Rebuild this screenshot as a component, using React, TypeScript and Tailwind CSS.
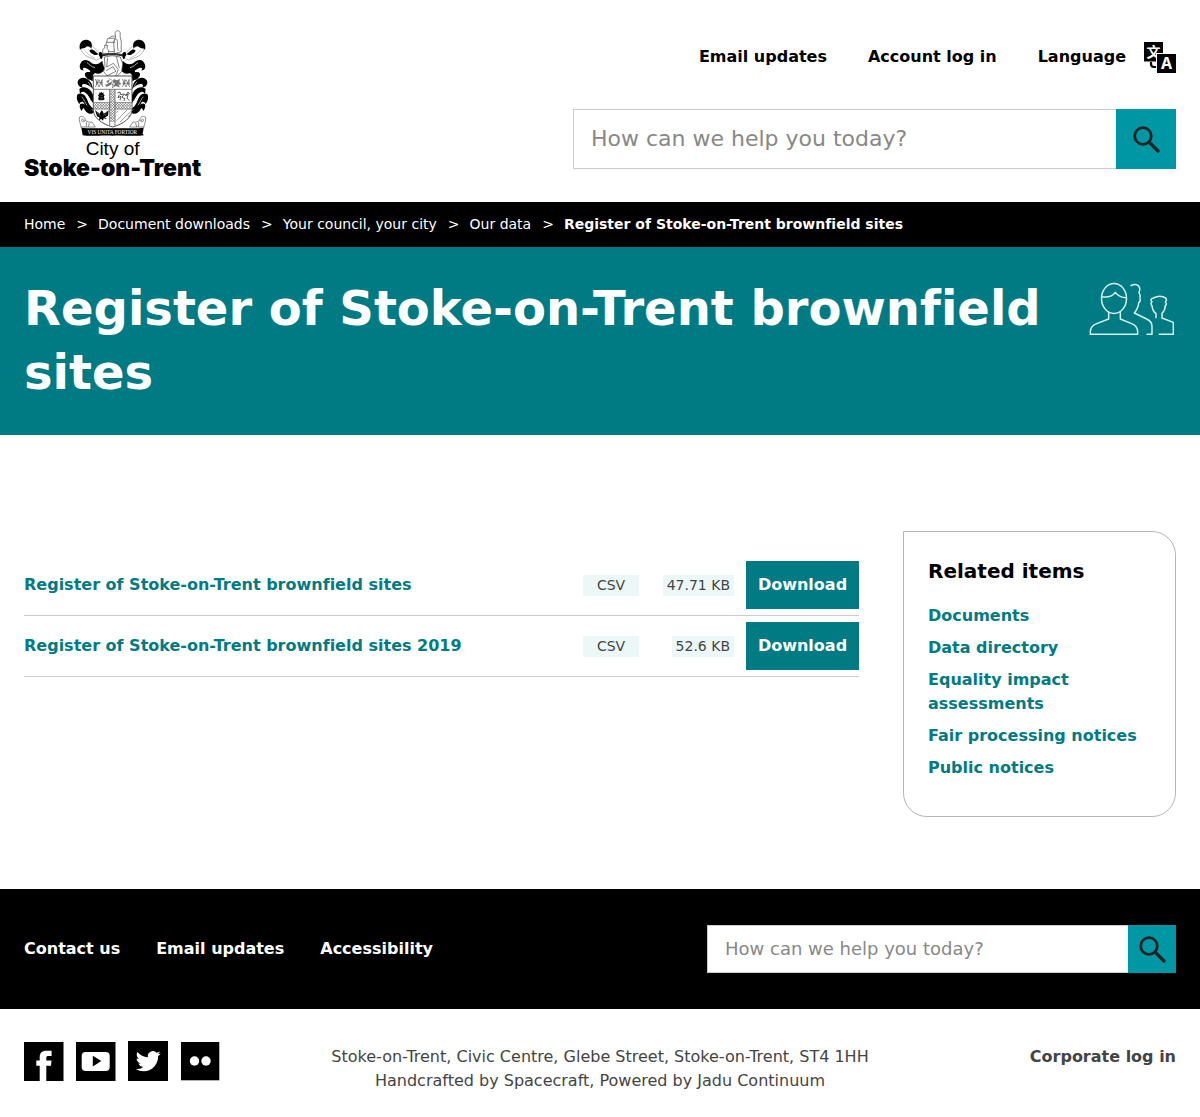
import React from "react";

/* One side of the crest's mantling; the other side is its mirror image. */
function Mantling() {
  return (
    <g>
      <path d="M204 88C206 96 214 107 228 112L250 120L268 112L258 98L236 76C230 72 222 72 218 79Z" fill="#fff" stroke="#777" strokeWidth="1.6" />
      <path d="M212 90C220 96 228 108 246 114M226 78C236 84 246 98 260 106" fill="none" stroke="#888" strokeWidth="1.4" />
      <path d="M201 90C196 71 207 57 224 60C236 63 239 74 235 85C229 78 223 77 218 82C213 88 206 80 201 90Z" />
      <path d="M230 90C236 86 243 90 247 95L256 102C251 107 243 105 238 101C233 98 229 96 230 90Z" />
      <path d="M259 97C264 94 270 99 270 106L266 118C260 116 261 108 257 104Z" />
      <path d="M201 134C205 118 221 116 232 126C243 136 256 135 268 122L270 138C264 150 254 156 244 155C230 155 224 143 214 143C208 143 208 148 213 151C203 152 198 143 201 134Z" />
      <path d="M222 128C229 132 234 141 246 143M232 121C240 128 250 128 260 121" fill="none" stroke="#fff" strokeWidth="2" />
      <path d="M246 148C256 146 265 138 269 129L275 147C269 160 256 164 246 159L238 167C228 166 228 156 234 151Z" />
      <path d="M220 157C231 153 240 160 240 169L239 184C232 178 228 182 222 175C214 168 214 160 220 157Z" />
      <path d="M195 182C201 171 216 170 226 179C234 186 239 194 239 207C231 200 224 192 214 192C206 192 205 198 210 202C199 203 191 192 195 182Z" />
      <path d="M199 207C209 197 225 202 234 213L240 224V248C229 237 226 220 213 216C207 214 203 218 201 222Z" />
      <path d="M194 223C204 216 217 223 222 238C227 254 235 261 242 268C230 274 218 262 213 250C209 242 203 245 199 252C192 243 189 231 194 223Z" />
      <path d="M202 252C212 246 219 257 228 265C234 270 239 270 245 275C234 287 220 279 215 269C212 262 208 264 207 273C201 268 198 258 202 252Z" />
      <path d="M218 221C226 228 228 239 236 252M225 186C231 191 235 203 238 213M206 230C212 236 215 246 222 256" fill="none" stroke="#fff" strokeWidth="1.8" />
      <path d="M200 291C207 286 218 292 216 301C214 308 204 307 206 299C209 294 214 301 210 303M200 291C196 298 202 309 205 324M216 300C222 305 230 308 237 306L247 321H205M220 306V321M229 309L226 321" fill="none" stroke="#555" strokeWidth="2" />
    </g>
  );
}

function Fret({ x, y }: { x: number; y: number }) {
  return (
    <path
      d={`M${x} ${y}l8 8l-8 8M${x + 8} ${y}l-8 8l8 8`}
      fill="none"
      stroke="#444"
      strokeWidth="1.5"
    />
  );
}

function Crest() {
  return (
    <svg viewBox="180 30 240 321" className="h-[107px] w-20" aria-hidden="true">
      <Mantling />
      <g transform="translate(597 0) scale(-1 1)">
        <Mantling />
      </g>
      {/* crest figure on its kiln */}
      <g fill="#fff" stroke="#444" strokeWidth="2">
        <path d="M307 45C304 34 312 29 319 34C325 39 319 46 322 53C328 67 323 79 325 95L304 101L300 69L308 55Z" />
        <path d="M284 55L306 55L302 67L304 95H282L279 73Z" />
        <path d="M270 100C267 91 270 85 276 83L274 76H284L282 85C288 89 287 96 285 101Z" />
        <path d="M288 55C293 49 301 47 307 49M311 57C316 65 310 78 316 92M306 67H281" fill="none" />
      </g>
      <path d="M268 103Q298 95 329 103L327 109Q298 102 270 109Z" fill="#333" />
      <g fill="#fff" stroke="#444" strokeWidth="2">
        <path d="M274 111Q298 103 322 111L329 132L326 154L312 169H284L272 155L276 139Z" />
        <path d="M284 113L281 141L301 130L316 149L308 168" fill="none" />
        <path d="M310 109L319 144M279 152L300 140L309 154L283 167" fill="none" />
      </g>
      {/* shield */}
      <path d="M241 168H357V270C357 292 332 312 299 321C266 312 241 292 241 270Z" fill="#fff" stroke="#333" strokeWidth="2.5" />
      <path d="M241 208H357M241 248H290M306 248H357M242 267H290M306 267H356M290 208V317M306 208V317" stroke="#444" strokeWidth="2" fill="none" />
      <g fill="none" stroke="#555" strokeWidth="2">
        <path d="M247 177L258 201L269 178M247 201L258 179L270 201M250 188H269M328 177L339 201L350 178M328 201L339 179L350 201M329 190H350M253 178L250 195M265 179L268 195M335 178L331 195M347 179L349 195" />
      </g>
      <path d="M280 184L290 178L286 189L297 186L293 195L281 201L276 194L286 191ZM304 178L313 181L321 176L319 186L326 193L317 194L321 202L308 198L302 201L306 191L300 187Z" fill="#777" />
      <path d="M288 175L299 182L292 191L306 197M302 178L298 204L311 191" stroke="#444" strokeWidth="1.5" fill="none" />
      {[210, 226, 242, 258, 274, 290].map((y) => (
        <g key={y}>
          <Fret x={290} y={y} />
          <Fret x={298} y={y} />
        </g>
      ))}
      {[243, 251, 259, 267, 275, 283, 306, 314, 322, 330, 338, 346].map((x) => (
        <Fret key={x} x={x} y={250} />
      ))}
      <path d="M258 216L261 220L265 215L268 220L272 216L271 222L275 226L272 231L275 237L271 241H259L255 237L258 231L255 226L259 222Z" />
      <path d="M260 226H270M260 232H270M260 237H270" stroke="#bbb" strokeWidth="1" />
      <path d="M313 219L321 216L323 224L333 222L339 226L346 222L342 234L349 242M319 224L315 233L324 229L321 241M333 223L327 232L336 236L333 243M338 228L345 216L350 222" fill="none" stroke="#222" strokeWidth="2.2" />
      <path d="M246 270L260 281L263 275L266 271L270 275L272 281L287 271L285 287L276 292L281 297L272 295L270 302L265 297L257 301L260 293L252 289Z" />
      <path d="M250 272L257 287M283 273L277 288M256 276L262 289M278 276L271 289" stroke="#bbb" strokeWidth="1" />
      <path d="M311 302L343 269M321 306L354 274M309 278L316 273M346 291L351 284" fill="none" stroke="#555" strokeWidth="1.8" />
      {/* motto ribbon */}
      <path d="M205 323C233 327 265 323 299 325C332 323 363 327 392 323L389 342L393 346C365 350 330 345 299 347C266 345 234 350 209 346Z" />
      <text x="298" y="341" textAnchor="middle" fontSize="16" fill="#fff" className="font-['Liberation_Serif',serif]">
        VIS UNITA FORTIOR
      </text>
    </svg>
  );
}

function Logo() {
  return (
    <a href="#home" className="flex flex-col items-center text-black">
      <Crest />
      <span className="mt-0.5 font-['Liberation_Sans',sans-serif] text-[19px] leading-5">City of</span>
      <span className="font-['Inter',sans-serif] text-[23px] leading-[18px] font-black">Stoke-on-Trent</span>
    </a>
  );
}

function TranslateIcon() {
  return (
    <svg viewBox="0 0 32 32" className="size-8" aria-hidden="true">
      <rect width="19" height="19.500" />
      <text x="9.500" y="14.500" textAnchor="middle" fontSize="14" fontWeight="700" fill="#fff" className="font-['Noto_Sans_CJK_SC',sans-serif]">
        文
      </text>
      <path d="M7 20V22Q7 25 10 25H13" fill="none" stroke="#000" strokeWidth="2.200" />
      <rect x="12" y="11" width="20" height="20" fill="#fff" />
      <rect x="13" y="12" width="19" height="19" />
      <text x="22.500" y="27" textAnchor="middle" fontSize="16" fontWeight="700" fill="#fff" className="font-['Noto_Sans',sans-serif]">
        A
      </text>
    </svg>
  );
}

function SearchIcon() {
  return (
    <svg viewBox="0 0 28 28" className="size-7" fill="none" stroke="#222" strokeLinecap="round" aria-hidden="true">
      <circle cx="11" cy="11" r="8.300" strokeWidth="2.800" />
      <path d="M17 17L26 26" strokeWidth="3.200" />
    </svg>
  );
}

function PeopleIcon() {
  return (
    <svg viewBox="27 36 255 162" className="mt-1.5 mr-0.5 h-[54px] w-[85px] shrink-0" fill="none" stroke="#d5f0ee" strokeWidth="4.500" strokeLinecap="round" strokeLinejoin="round" aria-hidden="true">
      <ellipse cx="102" cy="85.500" rx="37.500" ry="45" />
      <path d="M65 80Q93 85 106 67Q118 83 139 83" />
      <path d="M86 128V147L50 161Q31 168 31 185V193H173V185Q173 168 155 161L121 147V128" />
      <path d="M153 47Q163 40 174 46Q183 54 177 68Q183 76 180 85Q182 96 176 98Q176 112 163 129L200 147Q217 155 216 171V193H201" />
      <path d="M228 143V131Q217 122 216 107Q210 101 216 95Q208 88 220 84Q240 74 257 84Q262 90 256 96Q262 102 256 107Q255 122 246 130V144L280 157V193H238" />
    </svg>
  );
}

function SearchForm({ id, large }: { id: string; large?: boolean }) {
  return (
    <form role="search" onSubmit={(e) => e.preventDefault()} className={large ? "flex h-[60px] w-full" : "flex h-12 w-full"}>
      <input
        id={id}
        type="search"
        aria-label="Search this site"
        placeholder="How can we help you today?"
        className={
          large
            ? "min-w-0 flex-1 border border-r-0 border-[#ccc] bg-white px-[17px] pb-0.5 text-[22px] text-black placeholder:text-[#888]"
            : "min-w-0 flex-1 border border-r-0 border-[#ccc] bg-white px-[17px] pb-0.5 text-[18px] text-black placeholder:text-[#888]"
        }
      />
      <button type="submit" aria-label="Search" className={large ? "flex w-[60px] items-center justify-center bg-[#0097a4]" : "flex w-12 items-center justify-center bg-[#0097a4]"}>
        <SearchIcon />
      </button>
    </form>
  );
}

const crumbs = ["Home", "Document downloads", "Your council, your city", "Our data"];

const files = [
  { name: "Register of Stoke-on-Trent brownfield sites", type: "CSV", size: "47.71 KB" },
  { name: "Register of Stoke-on-Trent brownfield sites 2019", type: "CSV", size: "52.6 KB" },
];

const related = ["Documents", "Data directory", "Equality impact assessments", "Fair processing notices", "Public notices"];

const social = [
  {
    name: "Facebook",
    art: (
      <>
        <rect y="1" width="39.500" height="39" />
        <path fill="#fff" d="M15.700 40V24.700H12.300V19.600H15.700V16C15.700 12 18.200 9.800 22 9.800H27.600V15H24.300C22.800 15 22.300 15.600 22.300 17V19.600H27.500L27 24.700H22.300V40Z" />
      </>
    ),
  },
  {
    name: "YouTube",
    art: (
      <>
        <rect y="1" width="39.500" height="39" />
        <rect x="5.700" y="11" width="28" height="19" rx="4" fill="#fff" />
        <path d="M16.800 14.700V25.500L25.300 20Z" />
      </>
    ),
  },
  {
    name: "Twitter",
    art: (
      <>
        <rect width="40" height="40" />
        <path
          fill="#fff"
          transform="translate(7.700 7.700) scale(1.040)"
          d="M23.953 4.57a10 10 0 01-2.825.775 4.958 4.958 0 002.163-2.723c-.951.555-2.005.959-3.127 1.184a4.92 4.92 0 00-8.384 4.482C7.69 8.095 4.067 6.13 1.64 3.162a4.822 4.822 0 00-.666 2.475c0 1.71.87 3.213 2.188 4.096a4.904 4.904 0 01-2.228-.616v.06a4.923 4.923 0 003.946 4.827 4.996 4.996 0 01-2.212.085 4.936 4.936 0 004.604 3.417 9.867 9.867 0 01-6.102 2.105c-.39 0-.779-.023-1.17-.067a13.995 13.995 0 007.557 2.209c9.053 0 13.998-7.496 13.998-13.985 0-.21 0-.42-.015-.63A9.935 9.935 0 0024 4.59z"
        />
      </>
    ),
  },
  {
    name: "Flickr",
    art: (
      <>
        <rect x="1" y="1" width="38.300" height="38.300" />
        <circle cx="14.500" cy="20" r="4.700" fill="#fff" />
        <circle cx="26" cy="20" r="4.700" fill="#fff" />
      </>
    ),
  },
];

export default function App() {
  return (
    <div className="bg-white font-['DejaVu_Sans',sans-serif] text-base text-[#444] [font-variant-ligatures:none]">
      <header className="flex items-start justify-between gap-8 px-6 pt-[30px] pb-[25px]">
        <Logo />
        <div className="flex w-full max-w-[603px] flex-col gap-[35px] pt-3">
          <nav aria-label="Account" className="flex items-center justify-end font-bold text-black">
            <div className="mr-[18px] flex gap-[41px] pb-0.5 leading-6">
              <a href="#updates">Email updates</a>
              <a href="#account">Account log in</a>
              <a href="#language">Language</a>
            </div>
            <TranslateIcon />
          </nav>
          <SearchForm id="header-search" large />
        </div>
      </header>

      <nav aria-label="Breadcrumb" className="bg-black px-6 py-3 text-[14px] leading-[21px] text-white">
        <ol className="flex flex-wrap">
          {crumbs.map((c) => (
            <li key={c}>
              <a href="#crumb">{c}</a>
              <span className="pr-[10px] pl-[11px]" aria-hidden="true">
                &gt;
              </span>
            </li>
          ))}
          <li className="font-bold" aria-current="page">
            Register of Stoke-on-Trent brownfield sites
          </li>
        </ol>
      </nav>

      <div className="flex items-start bg-[#007b83] px-6 pt-[29px] pb-[31px]">
        <h1 className="flex-1 text-[48px] leading-[64px] font-bold text-white">Register of Stoke-on-Trent brownfield sites</h1>
        <PeopleIcon />
      </div>

      <div className="flex items-start gap-11 px-6 pt-24 pb-[72px]">
        <main className="min-w-0 flex-1 pt-6">
          <table className="w-full border-collapse" aria-label="Document downloads">
            <tbody>
              {files.map((f) => (
                <tr key={f.name} className="border-b border-[#ccc]">
                  <th scope="row" className="p-0 text-left font-bold text-[#007b83]">
                    <a href="#file">{f.name}</a>
                  </th>
                  <td className="w-14 p-0 text-[14px] leading-[21px]">
                    <div className="bg-[#ecf8f8] text-center">{f.type}</div>
                  </td>
                  <td className="w-[107px] py-0 pr-3 pl-0 text-right text-[14px] leading-[21px]">
                    <div className="ml-auto w-fit bg-[#ecf8f8] px-1">{f.size}</div>
                  </td>
                  <td className="w-[113px] px-0 py-1.5">
                    <a href="#download" className="block bg-[#007b83] text-center leading-[48px] font-bold text-white">
                      Download
                    </a>
                  </td>
                </tr>
              ))}
            </tbody>
          </table>
        </main>

        <aside className="w-[273px] rounded-r-3xl rounded-bl-3xl border border-[#b5b5b5] px-6 pt-6 pb-9">
          <h2 className="mb-[18px] text-[20px] leading-[30px] font-bold text-black">Related items</h2>
          <ul className="flex flex-col gap-2 leading-6 font-bold text-[#007b83]">
            {related.map((r) => (
              <li key={r}>
                <a href="#related">{r}</a>
              </li>
            ))}
          </ul>
        </aside>
      </div>

      <footer>
        <div className="flex items-center justify-between gap-8 bg-black px-6 py-9">
          <nav aria-label="Footer" className="flex gap-9 leading-6 font-bold text-white">
            <a href="#contact">Contact us</a>
            <a href="#updates">Email updates</a>
            <a href="#accessibility">Accessibility</a>
          </nav>
          <div className="w-full max-w-[469px]">
            <SearchForm id="footer-search" />
          </div>
        </div>
        <div className="grid grid-cols-[1fr_auto_1fr] items-start px-6 pt-8 pb-6 leading-6">
          <ul className="flex gap-3">
            {social.map((s) => (
              <li key={s.name}>
                <a href="#social" aria-label={s.name} className="block">
                  <svg viewBox="0 0 40 40" className="size-10" aria-hidden="true">
                    {s.art}
                  </svg>
                </a>
              </li>
            ))}
          </ul>
          <div className="pt-1 text-center">
            <p>Stoke-on-Trent, Civic Centre, Glebe Street, Stoke-on-Trent, ST4 1HH</p>
            <p>Handcrafted by Spacecraft, Powered by Jadu Continuum</p>
          </div>
          <a href="#corporate" className="justify-self-end pt-1 font-bold">
            Corporate log in
          </a>
        </div>
      </footer>
    </div>
  );
}
